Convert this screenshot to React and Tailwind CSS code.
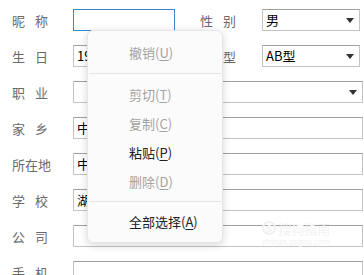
const font = { fontFamily: '"Noto Sans CJK SC", "Noto Sans", sans-serif' }

const Label = ({ chars }) => (
  <div className="w-[36px] flex justify-between text-[13px] leading-none text-[#6a6a6a]">
    {chars.map((c, i) => (
      <span key={i}>{c}</span>
    ))}
  </div>
)

const Arrow = () => (
  <svg width="8" height="5" viewBox="0 0 8 5" className="shrink-0">
    <path d="M0 0 L8 0 L4 5 Z" fill="#333" />
  </svg>
)

const Box = ({ className = '', children, focused }) => (
  <div
    className={
      'h-[22px] flex items-center px-[3px] text-[13px] text-black border bg-white ' +
      (focused ? 'border-[#3c84c8] ' : 'border-[#c3c3c3] border-t-[#a0a0a0] ') +
      className
    }
  >
    {children}
  </div>
)

const Select = ({ value, className = '' }) => (
  <Box className={'justify-between pr-[5px] ' + className}>
    <span>{value}</span>
    <Arrow />
  </Box>
)

const Row = ({ label, children }) => (
  <div className="flex items-center">
    <Label chars={label} />
    <div className="ml-[25px] flex items-center">{children}</div>
  </div>
)

const MenuItem = ({ text, hot, disabled }) => (
  <div
    className={
      'h-[29px] flex items-center pl-[41px] text-[13px] ' +
      (disabled ? 'text-[#a3a3a3]' : 'text-[#222]')
    }
  >
    {text}(<span className="underline underline-offset-2">{hot}</span>)
  </div>
)

export default function App() {
  return (
    <div className="relative w-[364px] h-[275px] overflow-hidden bg-white" style={font}>
      <div className="flex flex-col gap-[14px] pt-[9px] pl-[12px]">
        <Row label={['昵', '称']}>
          <Box focused className="w-[102px]" />
          <div className="ml-[25px] mr-[26px]">
            <Label chars={['性', '别']} />
          </div>
          <Select value="男" className="w-[98px]" />
        </Row>
        <Row label={['生', '日']}>
          <Box className="w-[102px]">19</Box>
          <div className="ml-[25px] mr-[26px]">
            <Label chars={['血', '型']} />
          </div>
          <Select value="AB型" className="w-[98px]" />
        </Row>
        <Row label={['职', '业']}>
          <Select value="" className="w-[290px]" />
        </Row>
        <Row label={['家', '乡']}>
          <Box className="w-[290px]">中</Box>
        </Row>
        <Row label={['所', '在', '地']}>
          <Box className="w-[290px]">中</Box>
        </Row>
        <Row label={['学', '校']}>
          <Box className="w-[290px]">湖</Box>
        </Row>
        <Row label={['公', '司']}>
          <Box className="w-[290px]" />
        </Row>
        <Row label={['手', '机']}>
          <Box className="w-[290px]" />
        </Row>
      </div>

      {/* faint watermark */}
      <div className="absolute left-[262px] top-[221px] flex flex-col items-center text-[#f2f2f2] leading-none">
        <div className="flex items-center gap-[2px] text-[13px]">
          <span className="w-[14px] h-[14px] rounded-full border-2 border-[#f0f0f0] text-[9px] flex items-center justify-center font-bold">S</span>
          <span>搜狗指南</span>
        </div>
        <span className="text-[8px] mt-[3px]">zhinan.sogou.com</span>
      </div>

      {/* context menu */}
      <div className="absolute left-[87px] top-[30px] w-[136px] h-[213px] rounded-[6px] bg-[#fbfbfb] border border-[#e6e6e6] shadow-[0_2px_8px_rgba(0,0,0,0.16)] pt-[7px]">
        <MenuItem text="撤销" hot="U" disabled />
        <div className="mt-[6px] mb-[6px] mx-[1px] h-px bg-[#e4e4e4]" />
        <MenuItem text="剪切" hot="T" disabled />
        <MenuItem text="复制" hot="C" disabled />
        <MenuItem text="粘贴" hot="P" />
        <MenuItem text="删除" hot="D" disabled />
        <div className="mt-[5px] mb-[5px] mx-[1px] h-px bg-[#e4e4e4]" />
        <MenuItem text="全部选择" hot="A" />
      </div>
    </div>
  )
}
